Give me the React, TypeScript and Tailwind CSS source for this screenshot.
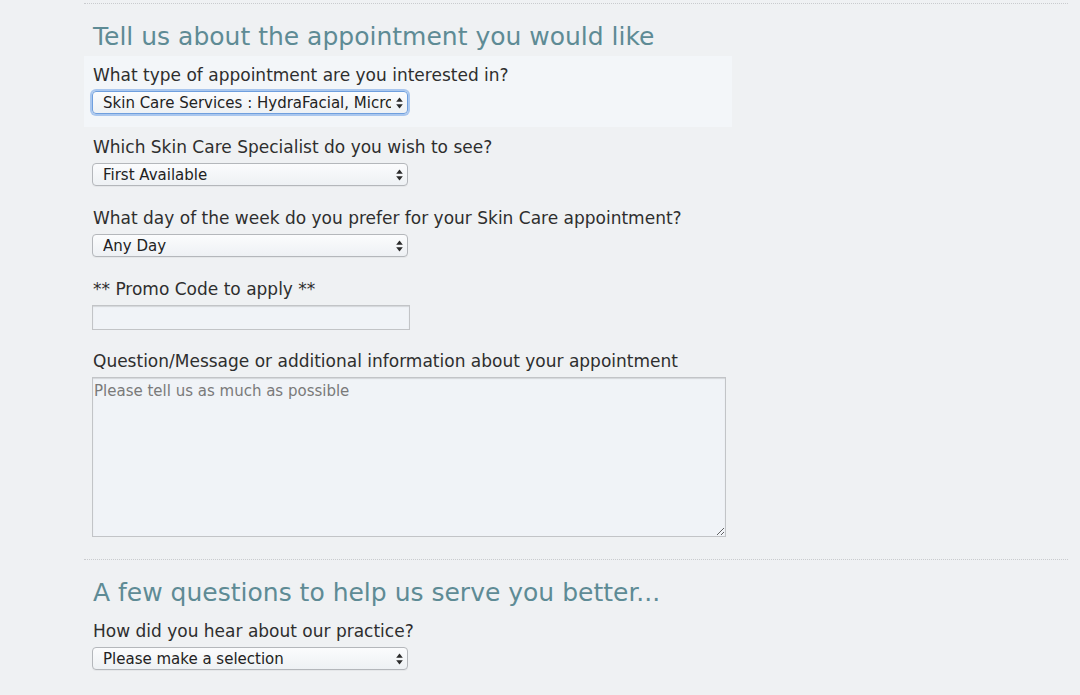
import React from "react";

const font = { fontFamily: '"DejaVu Sans", Verdana, sans-serif' };

function Arrows() {
  return (
    <svg
      width="7"
      height="12"
      viewBox="0 0 7 12"
      className="pointer-events-none absolute right-[5px] top-1/2 -translate-y-1/2"
    >
      <path d="M3.5 0.5 L6.8 4.8 L0.2 4.8 Z" fill="#2a2a2a" />
      <path d="M3.5 11.5 L6.8 7.2 L0.2 7.2 Z" fill="#2a2a2a" />
    </svg>
  );
}

function Select({ value, focused }: { value: string; focused?: boolean }) {
  return (
    <div className="relative mt-[6px] w-[316px]">
      <select
        defaultValue={value}
        className={
          "block h-[23px] w-full appearance-none overflow-hidden text-clip whitespace-nowrap rounded-[4px] border bg-gradient-to-b from-[#fbfcfd] to-[#eef1f4] pl-[10px] pr-[16px] pt-[1px] text-[15px] leading-[21px] text-[#222] outline-none " +
          (focused
            ? "border-[#6f9fde] shadow-[0_0_0_2px_rgba(110,160,230,0.55)]"
            : "border-[#b4b7bb] shadow-[0_1px_0_rgba(0,0,0,0.04)]")
        }
        style={font}
      >
        <option>{value}</option>
      </select>
      <Arrows />
    </div>
  );
}

function Label({ children }: { children: React.ReactNode }) {
  return <label className="block pl-[1px] text-[17px] leading-[20px] text-[#2e2e2e]">{children}</label>;
}

export default function App() {
  return (
    <div className="min-h-[695px] w-full bg-[#eff1f3]" style={font}>
      <div className="ml-[84px] w-[984px] pt-[3px]">
        <div className="border-t border-dotted border-[#c9cbce]" />

        <h2 className="mt-[19px] pl-[9px] text-[25px] leading-[28px] text-[#5e8b95]">
          Tell us about the appointment you would like
        </h2>

        <div className="mt-[5px] w-[648px] bg-[#f3f6f9] pb-[13px] pl-[8px] pt-[9px]">
          <Label>What type of appointment are you interested in?</Label>
          <Select value="Skin Care Services : HydraFacial, Microdermabrasion" focused />
        </div>

        <div className="mt-[10px] pl-[8px]">
          <Label>Which Skin Care Specialist do you wish to see?</Label>
          <Select value="First Available" />
        </div>

        <div className="mt-[22px] pl-[8px]">
          <Label>What day of the week do you prefer for your Skin Care appointment?</Label>
          <Select value="Any Day" />
        </div>

        <div className="mt-[22px] pl-[8px]">
          <Label>** Promo Code to apply **</Label>
          <input
            type="text"
            className="mt-[6px] block h-[25px] w-[318px] border border-[#c2c4c7] bg-[#f0f3f7] shadow-[inset_0_1px_1px_rgba(0,0,0,0.12)] outline-none"
          />
        </div>

        <div className="mt-[21px] pl-[8px]">
          <Label>Question/Message or additional information about your appointment</Label>
          <textarea
            placeholder="Please tell us as much as possible"
            className="mt-[6px] block h-[160px] w-[634px] border border-[#c2c4c7] bg-[#f0f3f7] px-[1px] py-[5px] text-[15px] leading-[17px] text-[#333] shadow-[inset_0_1px_1px_rgba(0,0,0,0.12)] outline-none placeholder:text-[#7a7a7a]"
            style={font}
          />
        </div>

        <div className="mt-[22px] border-t border-dotted border-[#c9cbce]" />

        <h2 className="mt-[19px] pl-[9px] text-[25px] leading-[28px] text-[#5e8b95]">
          A few questions to help us serve you better...
        </h2>

        <div className="mt-[14px] pl-[8px]">
          <Label>How did you hear about our practice?</Label>
          <Select value="Please make a selection" />
        </div>
      </div>
    </div>
  );
}
